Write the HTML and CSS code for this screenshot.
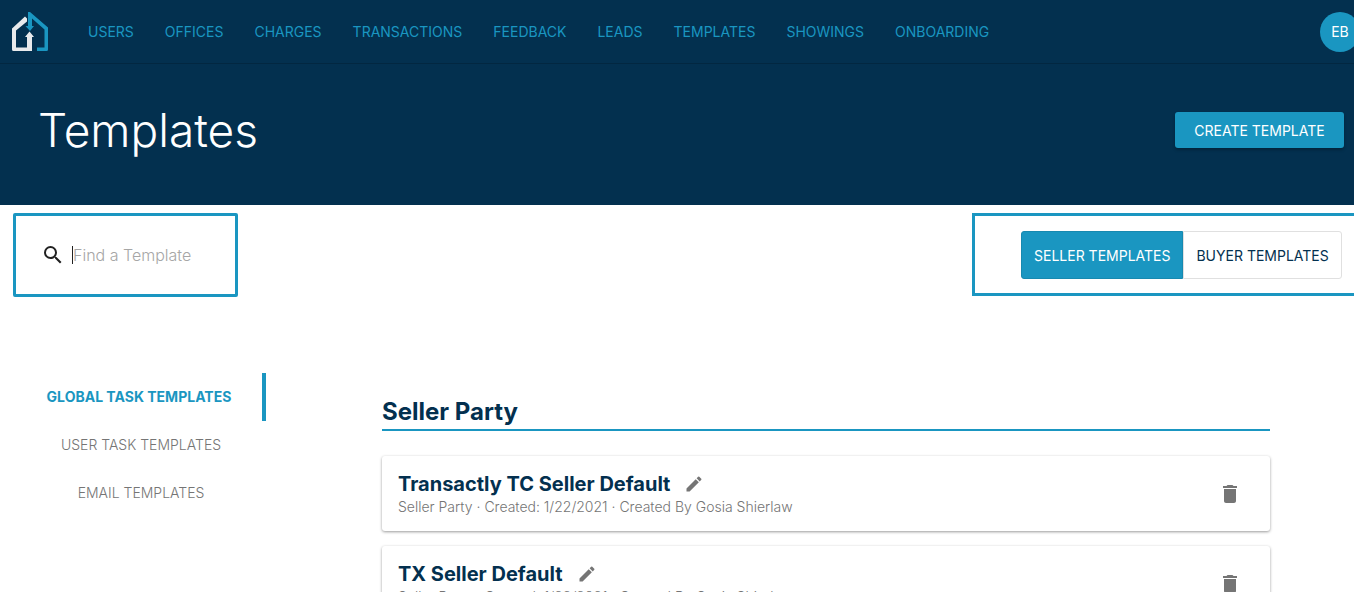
FILE: index.html
```html
<!DOCTYPE html>
<html lang="en">
<head>
  <meta charset="UTF-8" />
  <meta name="viewport" content="width=device-width, initial-scale=1.0" />
  <title>Templates</title>
  <link rel="stylesheet" href="styles.css">
</head>
<body>
  <!-- Top bar -->
  <div class="topbar">
    <svg class="logo" width="40" height="42" viewBox="0 0 40 42">
      <path fill="#e8eaec" d="M15 5.500 17 7.500 17 10.500 6 19.500 6 36.500 17 36.500 17 26 15 26 19.500 20.500 24 26 22 26 22 40 3.500 40Q2 40 2 38.500L2 17.500Z" />
      <path fill="#1a96c1" d="M18 1 20 1 38 16.500 38 38.500Q38 40 36.500 40L27 40 27 36.500 34.500 36.500 34.500 18.500 22 7.500 22 15 24 15 20 20 15.500 15 18 15Z" />
    </svg>
    <div class="nav">
      <a>USERS</a>
      <a>OFFICES</a>
      <a>CHARGES</a>
      <a>TRANSACTIONS</a>
      <a>FEEDBACK</a>
      <a>LEADS</a>
      <a>TEMPLATES</a>
      <a>SHOWINGS</a>
      <a>ONBOARDING</a>
    </div>
    <div class="avatar">EB</div>
  </div>

  <!-- Page header -->
  <div class="header">
    <h1>Templates</h1>
    <button class="create">CREATE TEMPLATE</button>
  </div>

  <!-- Search and toggle -->
  <div class="toolbar">
    <div class="search">
      <svg width="24" height="24" viewBox="0 0 24 24"><path fill="#212121" d="M15.500 14h-.79l-.28-.27A6.470 6.470 0 0 0 16 9.500 6.500 6.500 0 1 0 9.500 16c1.610 0 3.090-.59 4.230-1.570l.27.28v.79l5 4.990L20.490 19l-4.990-5zm-6 0C7.010 14 5 11.990 5 9.500S7.010 5 9.500 5 14 7.010 14 9.500 11.990 14 9.500 14z" /></svg>
      <span class="caret"></span>
      <span class="placeholder">Find a Template</span>
    </div>
    <div class="toggle">
      <button class="toggle-btn active">SELLER TEMPLATES</button>
      <button class="toggle-btn">BUYER TEMPLATES</button>
    </div>
  </div>

  <div class="main">
    <!-- Side menu -->
    <div class="side">
      <a class="side-item active">GLOBAL TASK TEMPLATES</a>
      <a class="side-item">USER TASK TEMPLATES</a>
      <a class="side-item">EMAIL TEMPLATES</a>
    </div>

    <!-- Template list -->
    <div class="content">
      <h2>Seller Party</h2>

      <div class="card">
        <div>
          <div class="card-title">
            <span>Transactly TC Seller Default</span>
            <svg width="20" height="20" viewBox="0 0 24 24"><path fill="#757575" d="M3 17.250V21h3.750L17.810 9.940l-3.750-3.750L3 17.250zM20.710 7.040a1 1 0 0 0 0-1.410l-2.340-2.340a1 1 0 0 0-1.410 0l-1.830 1.830 3.750 3.750 1.830-1.830z" /></svg>
          </div>
          <div class="card-meta">Seller Party · Created: 1/22/2021 · Created By Gosia Shierlaw</div>
        </div>
        <svg class="trash" width="24" height="24" viewBox="0 0 24 24"><path fill="#757575" d="M6 19c0 1.100.9 2 2 2h8c1.100 0 2-.9 2-2V7H6v12zM19 4h-3.500l-1-1h-5l-1 1H5v2h14V4z" /></svg>
      </div>

      <div class="card">
        <div>
          <div class="card-title">
            <span>TX Seller Default</span>
            <svg width="20" height="20" viewBox="0 0 24 24"><path fill="#757575" d="M3 17.250V21h3.750L17.810 9.940l-3.750-3.750L3 17.250zM20.710 7.040a1 1 0 0 0 0-1.410l-2.340-2.340a1 1 0 0 0-1.410 0l-1.830 1.830 3.750 3.750 1.830-1.830z" /></svg>
          </div>
          <div class="card-meta">Seller Party · Created: 1/22/2021 · Created By Gosia Shierlaw</div>
        </div>
        <svg class="trash" width="24" height="24" viewBox="0 0 24 24"><path fill="#757575" d="M6 19c0 1.100.9 2 2 2h8c1.100 0 2-.9 2-2V7H6v12zM19 4h-3.500l-1-1h-5l-1 1H5v2h14V4z" /></svg>
      </div>
    </div>
  </div>
</body>
</html>
```

FILE: styles.css
```css
html,
body {
  height: 592px;
  overflow: hidden;
}

body {
  font-family: Inter, "Open Sans", sans-serif;
  margin: 0;
  padding: 0;
  background: #fff;
  color: #03304f;
}

.topbar {
  display: flex;
  align-items: center;
  height: 63px;
  padding-left: 10px;
  background: #03304f;
  border-bottom: 1px solid #022741;
}

.logo {
  flex: none;
  margin-right: 38px;
}

.nav {
  display: flex;
  gap: 31px;
  font-size: 14px;
  color: #1a96c1;
}

.avatar {
  flex: none;
  width: 40px;
  height: 40px;
  margin-left: auto;
  margin-right: -6px;
  border-radius: 50%;
  background: #1a96c1;
  color: #fff;
  font-size: 14px;
  line-height: 40px;
  text-align: center;
}

.header {
  display: flex;
  align-items: center;
  justify-content: space-between;
  height: 141px;
  padding: 0 10px 9px 38px;
  box-sizing: border-box;
  background: #03304f;
}

.header h1 {
  margin: 0;
  font-size: 46px;
  font-weight: 300;
  color: #fff;
}

.create {
  width: 169px;
  height: 36px;
  padding: 0;
  border: none;
  border-radius: 3px;
  background: #1a96c1;
  color: #fff;
  font-family: inherit;
  font-size: 14px;
  box-shadow: 0 2px 3px rgba(0, 0, 0, 0.25);
}

.toolbar {
  display: flex;
  justify-content: space-between;
  align-items: flex-start;
  padding: 8px 0 0 13px;
}

.search {
  display: flex;
  align-items: center;
  width: 225px;
  height: 84px;
  box-sizing: border-box;
  padding: 0 0 0 25px;
  border: 3px solid #1a96c1;
  border-radius: 2px;
}

.caret {
  width: 1px;
  height: 18px;
  margin-left: 7px;
  background: #212121;
}

.placeholder {
  font-size: 16px;
  font-weight: 300;
  color: #a6a6a6;
}

.toggle {
  display: flex;
  align-items: center;
  width: 390px;
  height: 83px;
  box-sizing: border-box;
  margin-right: -8px;
  padding: 1px 0 0 46px;
  border: 3px solid #1a96c1;
  border-right: none;
}

.toggle-btn {
  height: 48px;
  padding: 0 12px;
  border: 1px solid #e0e0e0;
  border-radius: 0 3px 3px 0;
  background: #fff;
  color: #03304f;
  font-family: inherit;
  font-size: 14px;
}

.toggle-btn.active {
  border: 1px solid #1789b0;
  border-radius: 3px 0 0 3px;
  background: #1a96c1;
  color: #fff;
}

.main {
  display: flex;
  align-items: flex-start;
  margin-top: 76px;
  padding-left: 16px;
}

.side {
  flex: none;
  width: 250px;
  margin-right: 116px;
}

.side-item {
  display: block;
  height: 48px;
  font-size: 14px;
  font-weight: 300;
  line-height: 48px;
  text-align: center;
  color: #757575;
}

.side-item.active {
  box-sizing: border-box;
  border-right: 4px solid #1a96c1;
  font-weight: 700;
  color: #1a96c1;
}

.content {
  flex: none;
  width: 888px;
}

.content h2 {
  margin: 0 0 25px;
  padding: 24px 0 2px;
  border-bottom: 2px solid #1a96c1;
  font-size: 24px;
  font-weight: 700;
  line-height: 30px;
}

.card {
  display: flex;
  align-items: center;
  justify-content: space-between;
  height: 75px;
  box-sizing: border-box;
  margin-bottom: 15px;
  padding: 0 28px 0 16px;
  border-radius: 3px;
  background: #fff;
  box-shadow: 0 1px 3px rgba(0, 0, 0, 0.4);
}

.card-title {
  display: flex;
  align-items: center;
  gap: 14px;
  font-size: 20px;
  font-weight: 700;
  line-height: 26px;
}

.card-meta {
  font-size: 14px;
  font-weight: 300;
  line-height: 20px;
  color: #757575;
}
```
